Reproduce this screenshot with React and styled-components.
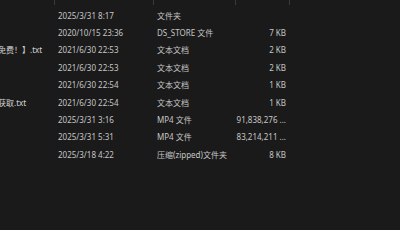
import React from 'react';
import styled, { createGlobalStyle } from 'styled-components';

const GlobalStyle = createGlobalStyle`
  html, body {
    margin: 0;
    padding: 0;
    background: #1a1a1a;
  }
  body {
    width: 400px;
    height: 230px;
    overflow: hidden;
    font-family: "Noto Sans", "Noto Sans CJK SC", sans-serif;
  }
`;

const COLS = '55px 99px 82px 54px 1fr';

const files = [
  { name: '', date: '2025/3/31 8:17', type: '文件夹', size: '' },
  { name: '', date: '2020/10/15 23:36', type: 'DS_STORE 文件', size: '7 KB' },
  { name: '免费！】.txt', date: '2021/6/30 22:53', type: '文本文档', size: '2 KB' },
  { name: '', date: '2021/6/30 22:53', type: '文本文档', size: '2 KB' },
  { name: '', date: '2021/6/30 22:54', type: '文本文档', size: '1 KB' },
  { name: '获取.txt', date: '2021/6/30 22:54', type: '文本文档', size: '1 KB' },
  { name: '', date: '2025/3/31 3:16', type: 'MP4 文件', size: '91,838,276 ...' },
  { name: '', date: '2025/3/31 5:31', type: 'MP4 文件', size: '83,214,211 ...' },
  { name: '', date: '2025/3/18 4:22', type: '压缩(zipped)文件夹', size: '8 KB' },
];

const Explorer = styled.div`
  width: 400px;
  height: 230px;
  background: #1a1a1a;
  color: #c6c6c6;
  font-size: 8px;
`;

const Header = styled.div`
  display: grid;
  grid-template-columns: ${COLS};
  height: 5px;
`;

const HeaderCell = styled.div`
  border-right: ${(p) => (p.$divider ? '1px solid #3a3a3a' : 'none')};
`;

const List = styled.div`
  display: flex;
  flex-direction: column;
  padding-top: 1.5px;
`;

const Row = styled.div`
  display: grid;
  grid-template-columns: ${COLS};
  height: 17.4px;
  align-items: center;
  white-space: nowrap;
`;

const NameCell = styled.div`
  overflow: hidden;
  text-indent: -2px;
  color: #d4d4d4;
`;

const Cell = styled.div`
  padding-left: 3px;
  overflow: hidden;
`;

const SizeCell = styled.div`
  text-align: right;
  padding-right: 4px;
`;

export default function App() {
  return (
    <>
      <GlobalStyle />
      <Explorer>
        <Header>
          <HeaderCell $divider />
          <HeaderCell $divider />
          <HeaderCell $divider />
          <HeaderCell $divider />
          <HeaderCell />
        </Header>
        <List>
          {files.map((f, i) => (
            <Row key={i}>
              <NameCell>{f.name}</NameCell>
              <Cell>{f.date}</Cell>
              <Cell>{f.type}</Cell>
              <SizeCell>{f.size}</SizeCell>
              <div />
            </Row>
          ))}
        </List>
      </Explorer>
    </>
  );
}
